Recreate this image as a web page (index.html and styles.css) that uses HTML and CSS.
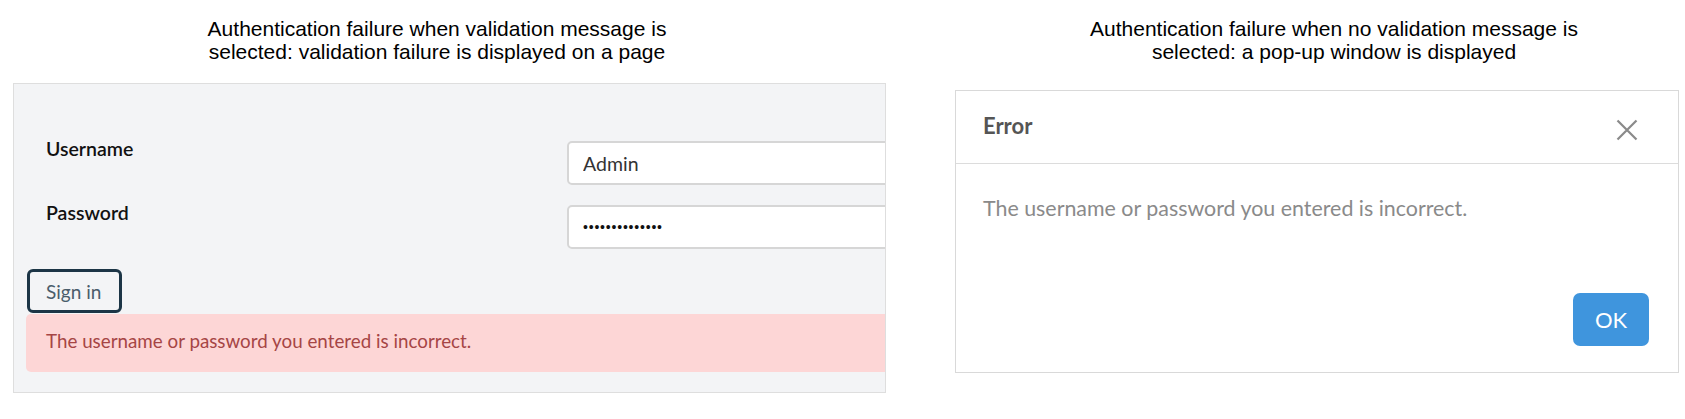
FILE: index.html
```html
<!DOCTYPE html>
<html lang="en">
<head>
<meta charset="utf-8">
<title>Authentication failure</title>
<link rel="stylesheet" href="styles.css">
</head>
<body>
<div class="page">
  <section class="col col-left">
    <h2 class="caption caption-left">Authentication failure when validation message is<br>selected: validation failure is displayed on a page</h2>
    <div class="login-panel">
      <form class="login-form">
        <div class="field-row">
          <label class="field-label">Username</label>
          <input class="field-input" type="text" value="Admin">
        </div>
        <div class="field-row">
          <label class="field-label">Password</label>
          <input class="field-input field-password" type="password" value="abcdefghijklmn">
        </div>
        <button type="button" class="signin-btn">Sign in</button>
        <div class="alert-error">The username or password you entered is incorrect.</div>
      </form>
    </div>
  </section>
  <section class="col col-right">
    <h2 class="caption caption-right">Authentication failure when no validation message is<br>selected: a pop-up window is displayed</h2>
    <div class="dialog">
      <div class="dialog-header">
        <span class="dialog-title">Error</span>
        <button type="button" class="dialog-close" aria-label="Close">
          <svg width="22" height="22" viewBox="0 0 22 22"><path d="M1.5 1.5L20.5 20.5M20.5 1.5L1.5 20.5" stroke="#8a8a8a" stroke-width="2.2" fill="none"/></svg>
        </button>
      </div>
      <div class="dialog-body">The username or password you entered is incorrect.</div>
      <div class="dialog-footer">
        <button type="button" class="ok-btn">OK</button>
      </div>
    </div>
  </section>
</div>
</body>
</html>
```
FILE: styles.css
```css
* { box-sizing: border-box; }
html, body { margin: 0; padding: 0; background: #fff; }
body { font-family: Lato, "Open Sans", sans-serif; }

.page {
  display: flex;
  align-items: flex-start;
  padding-left: 13px;
}

.col-left { width: 873px; }
.col-right { width: 724px; margin-left: 69px; }

.caption {
  margin: 17px 0 0;
  font-family: "Liberation Sans", Arial, sans-serif;
  font-weight: normal;
  font-size: 21px;
  line-height: 23px;
  color: #000;
  text-align: center;
}
.caption-left { padding-right: 25px; }
.caption-right { padding-left: 34px; }

/* Left: login panel */
.login-panel {
  margin-top: 20px;
  height: 310px;
  border: 1px solid #dedede;
  background: #f3f4f6;
  overflow: hidden;
  padding: 57px 0 0 13px;
}
.login-form { width: 1000px; }

.field-row {
  display: grid;
  grid-template-columns: 540px 420px;
  align-items: start;
  margin-bottom: 20px;
}
.field-label {
  padding-left: 19px;
  font-size: 19.5px;
  line-height: 14px;
  font-weight: 600;
  color: #111;
  padding-top: 1px;
}
.field-input {
  height: 44px;
  border: 2px solid #d6d6d6;
  border-radius: 5px;
  background: #fff;
  padding: 0 14px;
  font-family: Lato, sans-serif;
  font-size: 19.5px;
  color: #333;
  outline: none;
}
.field-password {
  font-family: "Liberation Sans", Arial, sans-serif;
  font-size: 14px;
  letter-spacing: 0.8px;
  color: #111;
}

.signin-btn {
  display: block;
  margin-top: 1px;
  width: 95px;
  height: 44px;
  border: 3px solid #1c3546;
  border-radius: 6px;
  background: transparent;
  padding: 0 0 0 16px;
  text-align: left;
  font-family: Lato, sans-serif;
  font-size: 19px;
  color: #4a5d6b;
}

.alert-error {
  margin: 1px 0 0 -1px;
  height: 58px;
  border-radius: 5px;
  background: #fdd6d6;
  padding: 15px 20px 0;
  font-size: 18.8px;
  color: #a64545;
}

/* Right: dialog */
.dialog {
  margin-top: 27px;
  border: 1px solid #d9d9d9;
  background: #fff;
}
.dialog-header {
  height: 73px;
  border-bottom: 1px solid #dcdcdc;
  display: flex;
  align-items: center;
  justify-content: space-between;
  padding: 0 40px 3px 27px;
}
.dialog-title {
  font-size: 22px;
  font-weight: 700;
  color: #555;
}
.dialog-close {
  border: 0;
  background: none;
  padding: 0;
  margin-top: 9px;
  width: 22px;
  height: 22px;
  display: flex;
}
.dialog-body {
  padding: 31px 27px 0;
  font-size: 21.4px;
  color: #8a8a8a;
  height: 56px;
}
.dialog-footer {
  display: flex;
  justify-content: flex-end;
  padding: 73px 29px 26px 0;
}
.ok-btn {
  width: 76px;
  height: 53px;
  border: 0;
  border-radius: 7px;
  background: #3f95dd;
  color: #fff;
  font-family: Lato, sans-serif;
  font-size: 22px;
  padding: 0;
}
```
